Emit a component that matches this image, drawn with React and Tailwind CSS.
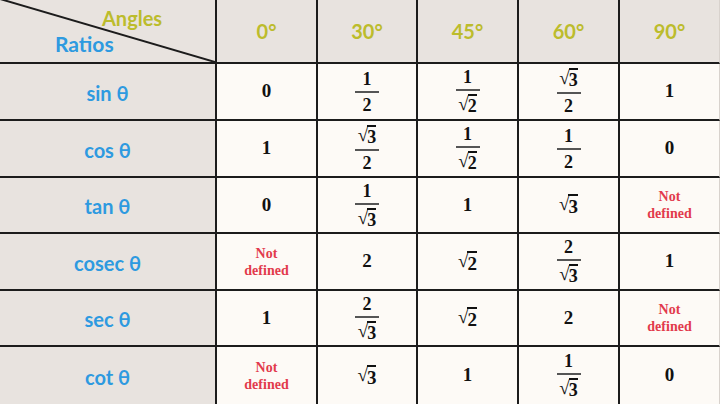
const serif = "font-['Liberation_Serif','DejaVu_Serif',serif]";
const sans = "font-['Lato','Open_Sans',sans-serif]";

function Sqrt({ n }) {
  return (
    <span className="inline-flex items-start leading-none">
      <span className="text-[19px]">√</span>
      <span className="-ml-[1px] border-t-2 border-[#111] pt-[1px] leading-none">{n}</span>
    </span>
  );
}

function Frac({ top, bottom }) {
  return (
    <span className="inline-flex flex-col items-center text-[18px] leading-none">
      <span className="pb-[3px]">{top}</span>
      <span className="h-[2px] w-[24px] bg-[#555]" />
      <span className="pt-[3px]">{bottom}</span>
    </span>
  );
}

const ND = "nd";

const rows = [
  ["sin θ", ["0", <Frac top="1" bottom="2" />, <Frac top="1" bottom={<Sqrt n="2" />} />, <Frac top={<Sqrt n="3" />} bottom="2" />, "1"]],
  ["cos θ", ["1", <Frac top={<Sqrt n="3" />} bottom="2" />, <Frac top="1" bottom={<Sqrt n="2" />} />, <Frac top="1" bottom="2" />, "0"]],
  ["tan θ", ["0", <Frac top="1" bottom={<Sqrt n="3" />} />, "1", <Sqrt n="3" />, ND]],
  ["cosec θ", [ND, "2", <Sqrt n="2" />, <Frac top="2" bottom={<Sqrt n="3" />} />, "1"]],
  ["sec θ", ["1", <Frac top="2" bottom={<Sqrt n="3" />} />, <Sqrt n="2" />, "2", ND]],
  ["cot θ", [ND, <Sqrt n="3" />, "1", <Frac top="1" bottom={<Sqrt n="3" />} />, "0"]],
];

const angles = ["0°", "30°", "45°", "60°", "90°"];
const rowHeights = ["h-[57px]", "h-[57px]", "h-[56px]", "h-[57px]", "h-[56px]", "h-[57px]"];

export default function App() {
  return (
    <div className="h-[404px] w-[720px] overflow-hidden bg-[#fdfaf6]">
      <div className="grid grid-cols-[217px_101px_100px_101px_101px_100px]">
        <div className="relative flex h-[64px] flex-col border-b-2 border-r-2 border-[#1c1c1c] bg-[#e8e3df]">
          <svg className="absolute inset-0" width="215" height="62">
            <line x1="0" y1="-1" x2="215" y2="62" stroke="#1c1c1c" strokeWidth="2" />
          </svg>
          <span className={`${sans} pl-[102px] pt-[5px] text-[20px] font-bold leading-[26px] text-[#bcbc2c]`}>Angles</span>
          <span className={`${sans} pl-[55px] text-[21px] font-bold leading-[26px] text-[#2e9ae0]`}>Ratios</span>
        </div>
        {angles.map((a, i) => (
          <div
            key={a}
            className={`flex h-[64px] items-center justify-center border-b-2 border-[#1c1c1c] bg-[#e8e3df] ${sans} text-[20px] font-bold text-[#bcbc2c] ${i < 4 ? "border-r-2" : "border-r border-r-[#d8d2cd]"}`}
          >
            {a}
          </div>
        ))}
        {rows.map(([label, vals], r) => (
          <Row key={label} label={label} vals={vals} h={rowHeights[r]} last={r === rows.length - 1} />
        ))}
      </div>
    </div>
  );
}

function Row({ label, vals, h, last }) {
  const b = last ? "" : "border-b-2";
  return (
    <>
      <div className={`flex ${h} items-center justify-center border-r-2 ${b} border-[#1c1c1c] bg-[#e8e3df] ${sans} pt-[2px] text-[20px] font-bold text-[#2e9ae0]`}>
        {label}
      </div>
      {vals.map((v, i) => (
        <div
          key={i}
          className={`flex ${h} items-center justify-center ${b} border-[#1c1c1c] ${i < 4 ? "border-r-2" : "border-r border-r-[#d8d2cd]"} ${serif} text-[19px] font-bold text-[#111]`}
        >
          {v === ND ? (
            <span className="text-center text-[14px] leading-[17px] text-[#e23a4c]">
              Not
              <br />
              defined
            </span>
          ) : (
            v
          )}
        </div>
      ))}
    </>
  );
}
